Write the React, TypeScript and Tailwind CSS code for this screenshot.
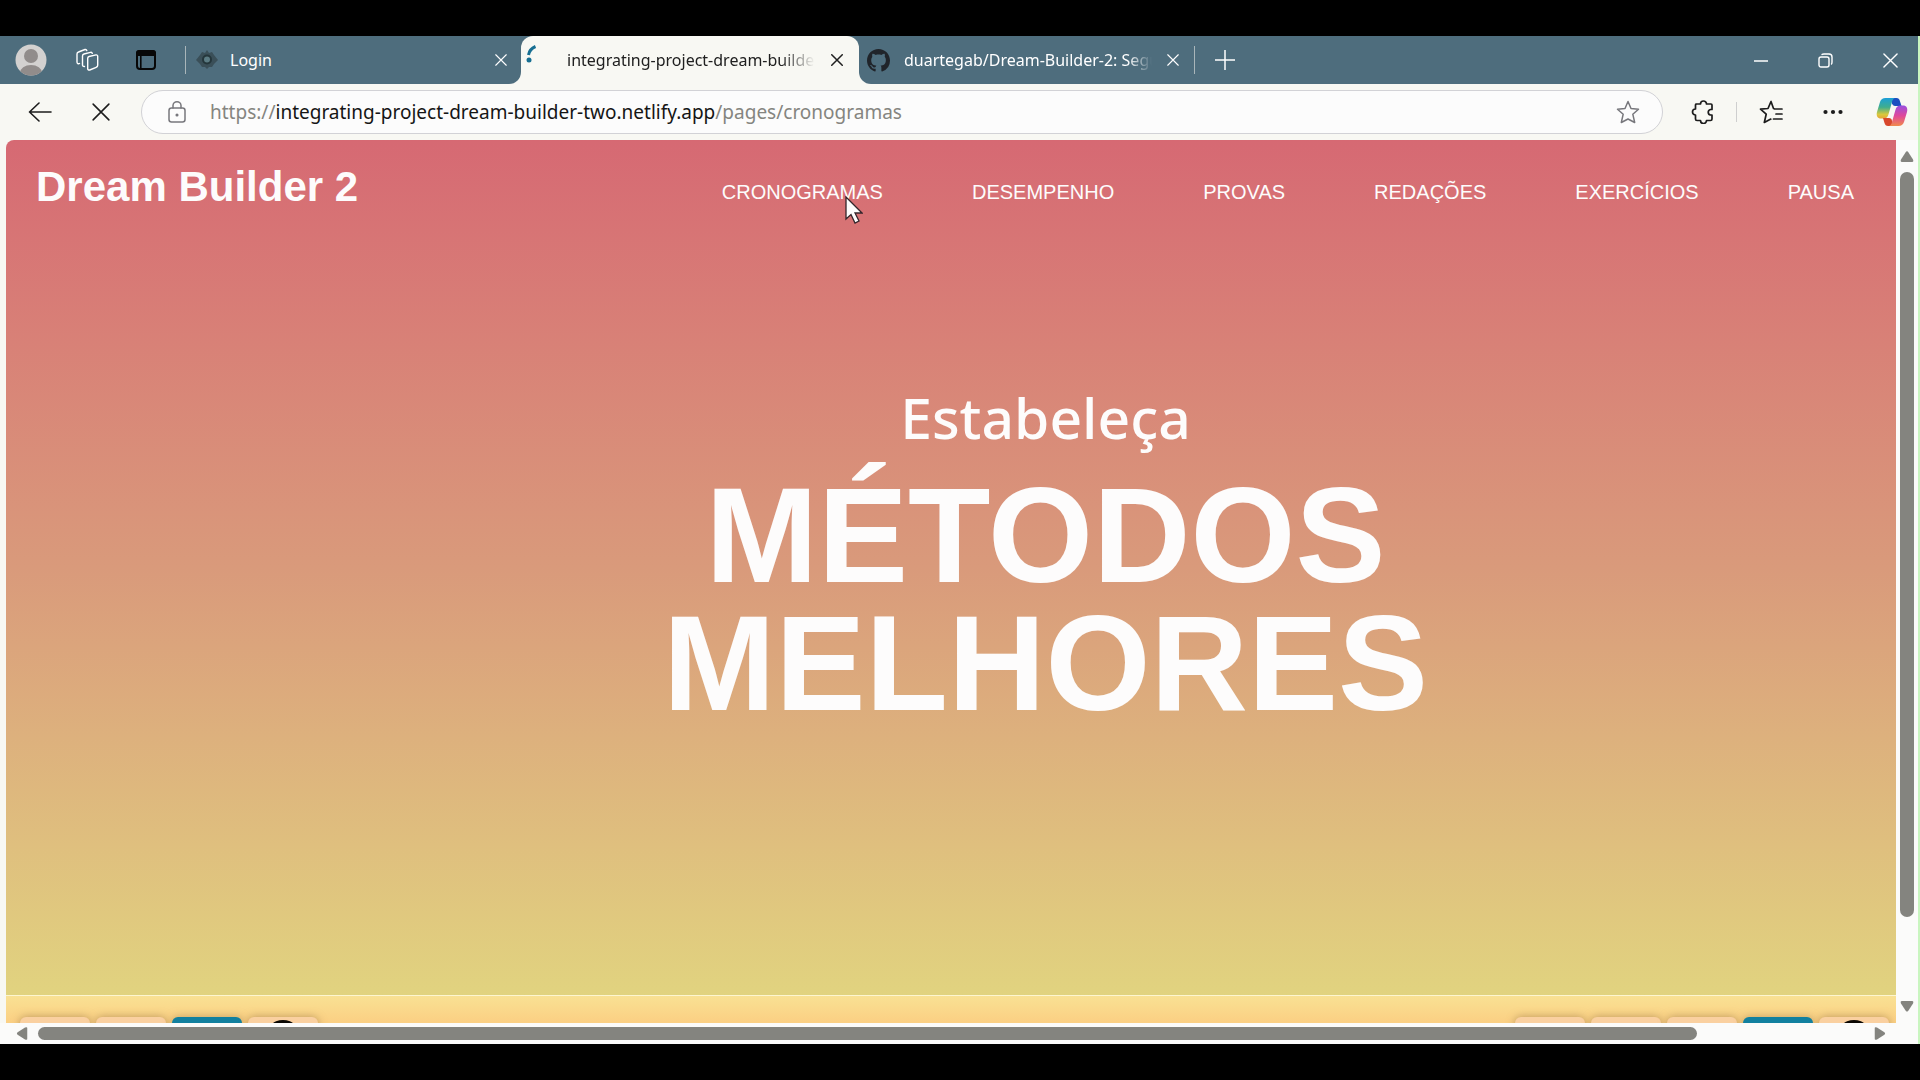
import React from "react";

const stroke = { fill: "none", stroke: "currentColor", strokeLinecap: "round", strokeLinejoin: "round" } as const;

function Cross({ className, w = 1.5 }: { className: string; w?: number }) {
  return (
    <svg viewBox="0 0 16 16" className={className} {...stroke} strokeWidth={w} aria-hidden="true">
      <path d="M1 1l14 14M15 1L1 15" />
    </svg>
  );
}

function Profile() {
  return (
    <svg viewBox="0 0 32 32" className="size-8" aria-hidden="true">
      <defs>
        <clipPath id="face">
          <circle cx="16" cy="16" r="15.500" />
        </clipPath>
      </defs>
      <circle cx="16" cy="16" r="15.500" fill="#d3d1d0" />
      <g clipPath="url(#face)" fill="#918c8b">
        <circle cx="16" cy="12" r="7" />
        <ellipse cx="16" cy="29" rx="11" ry="8" />
      </g>
    </svg>
  );
}

function Workspaces() {
  return (
    <svg viewBox="0 0 24 24" className="size-6" {...stroke} strokeWidth="1.400" aria-hidden="true">
      <path d="M14 8.500l7-1.600a1.400 1.400 0 0 1 1.700 1.400v9a2 2 0 0 1-1.500 2l-6.500 2.700a1.400 1.400 0 0 1-2-1.300V10.500a2 2 0 0 1 1.300-2z" />
      <path d="M9.500 18.500a1.600 1.600 0 0 1-2-1.500V8a2 2 0 0 1 1.500-2l6.500-1.600a1.500 1.500 0 0 1 1.800 1" />
      <path d="M4.500 15.500a1.600 1.600 0 0 1-2.500-1.400V6a2 2 0 0 1 1.500-2L10 1.500a1.500 1.500 0 0 1 1.800 1" />
    </svg>
  );
}

function TabActions() {
  return (
    <svg viewBox="0 0 22 22" className="size-[22px]" aria-hidden="true">
      <rect x="2" y="2" width="18" height="18" rx="3" fill="none" stroke="#070707" strokeWidth="2" />
      <path d="M1 7V4a3 3 0 0 1 3-3h14a3 3 0 0 1 3 3v3zM5 7h1.600v13H5z" fill="#070707" />
    </svg>
  );
}

function Eye() {
  return (
    <svg viewBox="0 0 22 20" className="h-5 w-[22px]" aria-hidden="true">
      <path d="M0 10L4 5l2-3 3 1 2-3 2 3 3-1 2 3 4 5-4 4-2 3-3 0-2 2-2-2-3 0-2-3z" fill="#3a4f58" />
      <circle cx="11" cy="9.500" r="5" fill="#24363b" />
      <circle cx="11" cy="9.500" r="3" fill="#5b7b83" />
    </svg>
  );
}

function Github() {
  return (
    <svg viewBox="0 0 16 16" className="size-[23px]" fill="#20242a" aria-hidden="true">
      <path d="M8 0C3.580 0 0 3.580 0 8c0 3.540 2.290 6.530 5.470 7.590.4.070.55-.17.55-.38 0-.19-.01-.82-.01-1.490-2.010.37-2.530-.49-2.690-.94-.09-.23-.48-.94-.82-1.130-.28-.15-.68-.52-.01-.53.63-.01 1.080.58 1.230.82.72 1.210 1.870.87 2.330.66.07-.52.28-.87.51-1.070-1.780-.2-3.640-.89-3.640-3.950 0-.87.31-1.590.82-2.150-.08-.2-.36-1.020.08-2.120 0 0 .67-.21 2.200.82.64-.18 1.320-.27 2-.27s1.360.09 2 .27c1.530-1.040 2.200-.82 2.200-.82.44 1.100.16 1.920.08 2.120.51.56.82 1.270.82 2.150 0 3.070-1.870 3.750-3.650 3.950.29.25.54.73.54 1.480 0 1.070-.01 1.930-.01 2.200 0 .21.15.46.55.38A8.010 8.010 0 0 0 16 8c0-4.420-3.580-8-8-8z" />
    </svg>
  );
}

function Copilot() {
  return (
    <svg viewBox="0 0 32 30" className="h-[30px] w-8" aria-hidden="true">
      <defs>
        <linearGradient id="cpL" x1="0" y1="0" x2="0" y2="1">
          <stop offset="0" stopColor="#1c9fd8" />
          <stop offset=".45" stopColor="#3fae8e" />
          <stop offset=".8" stopColor="#d9c93c" />
          <stop offset="1" stopColor="#e8a338" />
        </linearGradient>
        <linearGradient id="cpR" x1="0" y1="0" x2="0" y2="1">
          <stop offset="0" stopColor="#9a4fe0" />
          <stop offset=".5" stopColor="#e0489a" />
          <stop offset="1" stopColor="#f08a4c" />
        </linearGradient>
      </defs>
      <path d="M16 1h4.500c2 0 2.800 1.200 3.400 3l1.600 5H19c-1.500 0-2.500-1-3-2.500z" fill="#1c4fc0" />
      <path d="M9.500 1H19c-1.800.5-2.400 2-3 4l-3.400 12c-.8 3-2.200 4.500-5 4.500H5C1.500 21.500 0 18.800 1 15L4 5c.9-2.800 2.700-4 5.500-4z" fill="url(#cpL)" />
      <path d="M16 29h-4c-2 0-2.900-1.200-3.500-3L7 21h6c1.800 0 2.600 1 3 2.500z" fill="#d8482c" />
      <path d="M22.500 29H13c1.800-.5 2.500-2 3-4l3.400-12c.8-3 2.200-4.500 5-4.500H27c3.500 0 5 2.700 4 6.500l-3 10c-.9 2.800-2.700 4-5.500 4z" fill="url(#cpR)" />
    </svg>
  );
}

function Triangle({ className }: { className: string }) {
  return (
    <svg viewBox="0 0 14 11" className={className} fill="#84847f" aria-hidden="true">
      <path d="M5.500 1.500Q7-.8 8.500 1.500L13 8.500Q14 11 12 11H2Q0 11 1 8.500z" />
    </svg>
  );
}

const links = ["CRONOGRAMAS", "DESEMPENHO", "PROVAS", "REDAÇÕES", "EXERCÍCIOS", "PAUSA"];

function Card({ kind }: { kind: string }) {
  if (kind === "blue") return <div className="h-10 w-[70px] rounded-t-md bg-[#12809f] shadow-[0_0_8px_#9c7a4a99]" />;
  return (
    <div className="flex h-10 w-[70px] justify-center rounded-t-md bg-[#fad0a0] pt-[3px] shadow-[0_0_8px_#9c7a4aaa]">
      {kind === "dot" && <div className="h-9 w-9 rounded-full bg-[#0a0702]" />}
    </div>
  );
}

export default function App() {
  return (
    <div className="flex h-screen flex-col bg-black py-9 font-['Noto_Sans',sans-serif]">
      <div className="flex min-h-0 flex-1 flex-col border-r-2 border-[#c9f5c0] bg-[#f8f8f3]">
        <div className="flex h-12 shrink-0 text-white">
          <div className="flex w-[521px] items-center rounded-br-xl bg-[#4e6d7d] pr-3.5 pl-[15px]">
            <button aria-label="Perfil"><Profile /></button>
            <button aria-label="Espaços de trabalho" className="ml-7"><Workspaces /></button>
            <button aria-label="Ações de guias" className="ml-9"><TabActions /></button>
            <div className="ml-7 h-7 w-px bg-[#a9b6ba]" />
            <div className="ml-2.5 flex flex-1 items-center">
              <Eye />
              <span className="ml-3 flex-1 text-base">Login</span>
              <button aria-label="Fechar guia"><Cross className="size-3" /></button>
            </div>
          </div>
          <div className="w-[338px] bg-[#4e6d7d]">
            <div className="flex h-full items-center rounded-t-xl bg-[#f8f8f3] pr-4 pl-[5px] text-[#202020]">
              <svg viewBox="0 0 12 20" className="mb-3 h-5 w-3" aria-hidden="true">
                <path d="M2.500 11Q3.500 5 9.500 2.500" fill="none" stroke="#176f92" strokeWidth="3" />
                <circle cx="3" cy="16" r="2.500" fill="#176f92" />
              </svg>
              <span className="ml-[29px] w-[248px] overflow-hidden text-base whitespace-nowrap [mask-image:linear-gradient(to_right,black_86%,transparent)]">
                integrating-project-dream-builder
              </span>
              <button aria-label="Fechar guia" className="ml-auto"><Cross className="size-3" w={2} /></button>
            </div>
          </div>
          <div className="flex flex-1 items-center rounded-bl-xl bg-[#4e6d7d] pl-2">
            <Github />
            <span className="ml-3.5 w-[248px] overflow-hidden text-base whitespace-nowrap [mask-image:linear-gradient(to_right,black_90%,transparent)]">
              duartegab/Dream-Builder-2: Segunda
            </span>
            <button aria-label="Fechar guia" className="ml-[15px]"><Cross className="size-3" /></button>
            <div className="ml-[15px] h-7 w-px bg-[#a9b6ba]" />
            <button aria-label="Nova guia" className="ml-5">
              <svg viewBox="0 0 20 20" className="size-5" {...stroke} strokeWidth="1.500"><path d="M10 0v20M0 10h20" /></svg>
            </button>
            <div className="ml-auto flex items-center gap-[50px] pr-5">
              <button aria-label="Minimizar">
                <svg viewBox="0 0 14 14" className="size-3.5" {...stroke} strokeWidth="1.500"><path d="M0 8h14" /></svg>
              </button>
              <button aria-label="Restaurar">
                <svg viewBox="0 0 15 15" className="size-[15px]" {...stroke} strokeWidth="1.400">
                  <rect x="1" y="4" width="10" height="10" rx="2" />
                  <path d="M4 1.500Q4.500 1 6 1h5a3 3 0 0 1 3 3v5q0 1.500-.5 2" />
                </svg>
              </button>
              <button aria-label="Fechar"><Cross className="size-[15px]" /></button>
            </div>
          </div>
        </div>

        <div className="flex h-14 shrink-0 items-center pr-2.5 pl-7 text-[#1c1c1c]">
          <button aria-label="Voltar">
            <svg viewBox="0 0 24 20" className="h-5 w-6" {...stroke} strokeWidth="1.600"><path d="M23 10H1.500M11 1L1.500 10l9.500 9" /></svg>
          </button>
          <button aria-label="Parar" className="ml-10"><Cross className="size-[18px]" w={1.4} /></button>
          <div className="ml-[31px] flex h-11 flex-1 items-center rounded-full border border-[#d2d2d6] bg-[#fcfcfc] pr-[22px] pl-[26px]">
            <svg viewBox="0 0 18 22" className="h-[22px] w-[18px] text-[#77777c]" {...stroke} strokeWidth="1.500" aria-hidden="true">
              <rect x="1" y="7" width="16" height="14" rx="2.500" />
              <path d="M5 7V4.500a4 3.700 0 0 1 8 0V7" />
              <circle cx="9" cy="14" r=".8" fill="currentColor" />
            </svg>
            <a href="#url" className="ml-6 text-[19px] whitespace-nowrap text-[#858580]">
              https://<span className="text-[#151515]">integrating-project-dream-builder-two.netlify.app</span>/pages/cronogramas
            </a>
            <button aria-label="Favoritar" className="ml-auto text-[#77777c]">
              <svg viewBox="0 0 24 24" className="size-6" {...stroke} strokeWidth="1.500">
                <path d="M12 1.500l3 7 7.500.7-5.700 5 1.900 8.300L12 19l-6.700 3.500 1.900-8.300-5.700-5 7.500-.7z" />
              </svg>
            </button>
          </div>
          <button aria-label="Extensões" className="ml-7">
            <svg viewBox="0 0 24 24" className="size-6" {...stroke} strokeWidth="1.700">
              <path d="M5 4h4.500a3 3 0 0 1 6 0H20a1 1 0 0 1 1 1v4.500h-1.500a2.800 2.800 0 0 0 0 5.500H21v4a1.500 1.500 0 0 1-1.500 1.500h-4a3 3 0 0 1-6 0H6A1.500 1.500 0 0 1 4.500 19v-4a3 3 0 0 1 0-6V5z" />
            </svg>
          </button>
          <div className="ml-[21px] h-5 w-px bg-[#cfcfcf]" />
          <button aria-label="Favoritos" className="ml-[22px]">
            <svg viewBox="0 0 24 24" className="size-6" {...stroke} strokeWidth="1.700">
              <path d="M15 8.500h-.5L12 1.500l-3 7-7.500.7 5.700 5-1.900 8.300 6.500-3.400M15.500 9H23M17 14h6M14.500 19H23" />
            </svg>
          </button>
          <button aria-label="Mais" className="ml-10">
            <svg viewBox="0 0 20 6" className="h-[6px] w-5" fill="currentColor">
              <circle cx="2.500" cy="3" r="2.100" /><circle cx="10" cy="3" r="2.100" /><circle cx="17.500" cy="3" r="2.100" />
            </svg>
          </button>
          <button aria-label="Copilot" className="ml-[33px]"><Copilot /></button>
        </div>

        <div className="flex min-h-0 flex-1">
          <div className="ml-1.5 flex min-w-0 flex-1 flex-col overflow-hidden rounded-tl-lg font-['Liberation_Sans',Arial,sans-serif]">
            <div className="min-h-0 flex-1 bg-linear-to-b from-[#d66973] via-[#d99a7b] to-[#e1d37f] text-[#fdfcfc]">
              <header className="flex h-[92px] items-center justify-between pr-[42px] pl-[30px]">
                <h1 className="text-[42px] font-bold">Dream Builder 2</h1>
                <nav className="flex gap-[89px] pt-3 text-xl">
                  {links.map((l, i) => (
                    <a key={l} href={"#" + l.toLowerCase()} className="relative">
                      {l}
                      {i === 0 && (
                        <svg viewBox="0 0 18 28" className="absolute top-[18px] right-5 h-7 w-[18px]" aria-hidden="true">
                          <path d="M1 1v22l5-4.500 4 8.500 4-2-4-8h7z" fill="#fdfcfc" stroke="#33252b" strokeWidth="1.300" />
                        </svg>
                      )}
                    </a>
                  ))}
                </nav>
              </header>
              <section className="w-[110%] pt-[145px] text-center">
                <p className="font-['Comic_Sans_MS','Noto_Sans',sans-serif] text-[57px] leading-[80px] font-medium">Estabeleça</p>
                <h2 className="mt-[15px] text-[135px] leading-[128px] font-bold">MÉTODOS<br />MELHORES</h2>
              </section>
            </div>
            <div className="flex h-7 shrink-0 justify-between overflow-hidden border-t border-[#fdf6cf] bg-linear-to-b from-[#f9e193] to-[#fbcf83] pt-[21px] pr-[7px] pl-3.5">
              <div className="flex gap-1.5">
                {["", "", "blue", "dot"].map((k, i) => <Card key={i} kind={k} />)}
              </div>
              <div className="flex gap-1.5">
                {["", "", "", "blue", "dot"].map((k, i) => <Card key={i} kind={k} />)}
              </div>
            </div>
          </div>
          <div className="flex w-[22px] flex-col items-center bg-[#fbfbfa] pt-[11px] pb-[11px]">
            <Triangle className="h-[11px] w-3.5" />
            <div className="my-2.5 w-3.5 flex-1">
              <div className="h-[91%] rounded-full bg-[#84847f]" />
            </div>
            <Triangle className="h-[11px] w-3.5 rotate-180" />
          </div>
        </div>
        <div className="flex h-[21px] shrink-0 items-center bg-[#fbfbfa] pr-[31px] pl-[15px]">
          <Triangle className="h-[11px] w-3.5 -rotate-90" />
          <div className="mr-3 ml-[9px] h-[13px] flex-1">
            <div className="h-full w-[91%] rounded-full bg-[#84847f]" />
          </div>
          <Triangle className="h-[11px] w-3.5 rotate-90" />
        </div>
      </div>
    </div>
  );
}
